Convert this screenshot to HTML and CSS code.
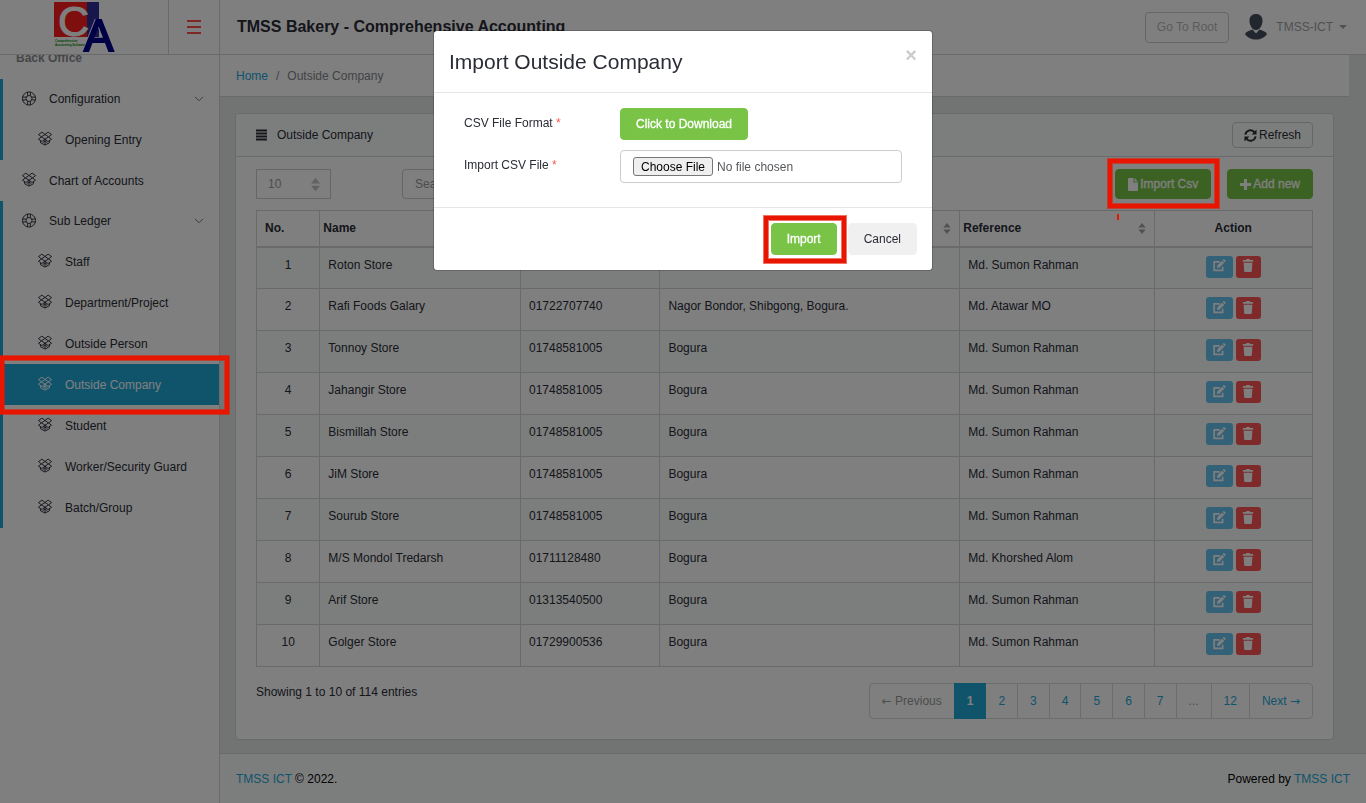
FILE: index.html
```html
<!DOCTYPE html>
<html lang="en">
<head>
<meta charset="utf-8">
<title>TMSS Bakery - Comprehensive Accounting</title>
<link rel="stylesheet" href="styles.css">
</head>
<body>
<svg class="defs" aria-hidden="true">
  <symbol id="ring" viewBox="0 0 16 16"><g fill="none" stroke="currentColor"><circle cx="8" cy="8" r="7"/><circle cx="8" cy="8" r="3.200"/><path d="M6.500 1v4M9.500 1v4M6.500 11v4M9.500 11v4M1 6.500h4M1 9.500h4M11 6.500h4M11 9.500h4"/></g></symbol>
  <symbol id="box" viewBox="0 0 16 16"><g fill="none" stroke="currentColor" stroke-linejoin="round"><path d="M4.700 1.200 8 3.700 4.200 6.300 1 3.800zM11.300 1.200 8 3.700l3.800 2.600L15 3.800zM4.200 6.300 1 8.800l3.700 2.400L8 8.700zM11.800 6.300 15 8.800l-3.700 2.400L8 8.700zM8 8.700v6M3.200 10.400v2.100L8 15l4.800-2.500v-2.100M5.500 12.500 8 10.500l2.500 2"/></g></symbol>
  <symbol id="sort" viewBox="0 0 8 12"><path fill="currentColor" d="M4 0 8 5H0zM0 7h8l-4 5z"/></symbol>
  <symbol id="edit" viewBox="0 0 16 16"><path fill="none" stroke="currentColor" stroke-width="2" d="M9 3.500H2V14h10.500V9.500"/><path fill="currentColor" d="m5.500 11 .5-3.200 5.800-5.800 2.700 2.700-5.800 5.800zM12.500 1.300l1-1q.7-.5 1.400.2l1.100 1.100q.6.700 0 1.300l-1 1z"/></symbol>
  <symbol id="trash" viewBox="0 0 12 14"><path fill="currentColor" d="M.5 1h3.300L4.500 0h3l.7 1h3.300v2H.5zM1.300 4h9.400l-.6 9q-.1 1-1.100 1H3q-1 0-1.100-1z"/></symbol>
  <symbol id="chevron" viewBox="0 0 10 6"><path fill="none" stroke="currentColor" d="m1 .8 4 4 4-4"/></symbol>
</svg>

<header class="topbar">
  <a class="brand" href="#" aria-label="Home page">
    <svg width="62" height="52" viewBox="0 0 62 52">
      <rect x="1" y="1" width="34" height="35" fill="#ff1c1c"/>
      <rect x="34" y="1" width="12" height="35" fill="#2e2e96"/>
      <text x="5" y="35" class="logo-c">C</text>
      <text x="31" y="50" class="logo-a">A</text>
      <text x="2" y="41" class="logo-small">Comprehensive</text>
      <text x="2" y="45" class="logo-small">Accounting Software</text>
    </svg>
  </a>
  <button class="menu" type="button" aria-label="Toggle menu"><svg width="14" height="16" viewBox="0 0 14 16"><path d="M0 2h14M0 8h14M0 14h14" stroke="#ff1616" stroke-width="1.500"/></svg></button>
  <h1 class="title">TMSS Bakery - Comprehensive Accounting</h1>
  <button class="btn root" type="button">Go To Root</button>
  <button class="user" type="button">
    <svg width="24" height="26" viewBox="0 0 24 26"><path fill="#454c5c" d="M12 0c4 0 6.500 2.600 6.500 6.500 0 4.500-2.500 9.500-6.500 9.500S5.500 11 5.500 6.500C5.500 2.600 8 0 12 0zM8.500 15.500 12 19.500l3.500-4c4 1.200 6.500 2.500 7.500 4.500-2 3.500-6.500 5.500-11 5.500S3 23.500 1 20c1-2 3.500-3.300 7.500-4.500z"/></svg>
    <span>TMSS-ICT</span><i class="caret"></i>
  </button>
</header>

<div class="layout">
  <nav class="sidebar">
    <div class="nav-scroll">
      <div class="nav-title">Back Office</div>
      <div class="group">
        <a class="item toggle" href="#"><svg class="ico"><use href="#ring"/></svg>Configuration<svg class="chev"><use href="#chevron"/></svg></a>
        <a class="item sub" href="#"><svg class="ico"><use href="#box"/></svg>Opening Entry</a>
      </div>
      <a class="item" href="#"><svg class="ico"><use href="#box"/></svg>Chart of Accounts</a>
      <div class="group">
        <a class="item toggle" href="#"><svg class="ico"><use href="#ring"/></svg>Sub Ledger<svg class="chev"><use href="#chevron"/></svg></a>
        <a class="item sub" href="#"><svg class="ico"><use href="#box"/></svg>Staff</a>
        <a class="item sub" href="#"><svg class="ico"><use href="#box"/></svg>Department/Project</a>
        <a class="item sub" href="#"><svg class="ico"><use href="#box"/></svg>Outside Person</a>
        <a class="item sub active" href="#"><svg class="ico"><use href="#box"/></svg>Outside Company</a>
        <a class="item sub" href="#"><svg class="ico"><use href="#box"/></svg>Student</a>
        <a class="item sub" href="#"><svg class="ico"><use href="#box"/></svg>Worker/Security Guard</a>
        <a class="item sub" href="#"><svg class="ico"><use href="#box"/></svg>Batch/Group</a>
      </div>
    </div>
  </nav>

  <div class="page">
    <main class="main">
      <div class="crumbs"><a href="#">Home</a><span class="slash">/</span><span>Outside Company</span></div>
      <section class="card">
        <div class="card-head">
          <svg width="11" height="12" viewBox="0 0 11 12"><path d="M0 1.500h11M0 4.500h11M0 7.500h11M0 10.500h11" stroke="#2a2c36" stroke-width="2"/></svg>
          <h2>Outside Company</h2>
          <button class="btn refresh" type="button"><svg width="13" height="13" viewBox="0 0 14 14"><g fill="none" stroke="currentColor" stroke-width="2"><path d="M1.500 6A5.500 5.500 0 0 1 11.500 3.800M12.500 8A5.500 5.500 0 0 1 2.500 10.200"/></g><path fill="currentColor" d="M13.500.5v5.300H8.200zM.5 13.500V8.200h5.300z"/></svg>Refresh</button>
        </div>
        <div class="card-body">
          <div class="tools">
            <span class="pick"><select aria-label="Rows per page"><option>10</option></select><svg class="updown"><use href="#sort"/></svg></span>
            <input class="search" type="text" placeholder="Search" aria-label="Search">
            <button class="btn green import-csv" type="button"><svg width="10" height="13" viewBox="0 0 10 13"><path fill="currentColor" d="M1 0h4.500v4.500H10V12q0 1-1 1H1q-1 0-1-1V1q0-1 1-1zM6.500 0 10 3.500H6.500z"/></svg>Import Csv</button>
            <button class="btn green" type="button"><svg width="11" height="11" viewBox="0 0 11 11"><path stroke="currentColor" stroke-width="3" d="M5.500 0v11M0 5.500h11"/></svg>Add new</button>
          </div>
          <table>
            <colgroup><col class="c-no"><col class="c-name"><col class="c-phone"><col class="c-addr"><col class="c-ref"><col></colgroup>
            <thead><tr><th class="first">No.</th><th>Name</th><th></th><th><svg class="sort"><use href="#sort"/></svg></th><th>Reference<svg class="sort"><use href="#sort"/></svg></th><th class="mid">Action</th></tr></thead>
            <tbody id="rows"></tbody>
          </table>
          <div class="below">
            <p>Showing 1 to 10 of 114 entries</p>
            <ul class="pager">
              <li class="off"><span><span class="arrow">←</span> Previous</span></li><li class="on"><a href="#">1</a></li><li><a href="#">2</a></li><li><a href="#">3</a></li><li><a href="#">4</a></li><li><a href="#">5</a></li><li><a href="#">6</a></li><li><a href="#">7</a></li><li class="off"><span>...</span></li><li><a href="#">12</a></li><li><a href="#">Next <span class="arrow">→</span></a></li>
            </ul>
          </div>
        </div>
      </section>
    </main>
    <footer class="footer"><span><a href="#">TMSS ICT</a> © 2022.</span><span>Powered by <a href="#">TMSS ICT</a></span></footer>
  </div>
</div>

<div class="backdrop">
  <div class="modal" role="dialog" aria-labelledby="dlg">
    <div class="modal-head"><h2 id="dlg">Import Outside Company</h2><button class="close" type="button" aria-label="Close">×</button></div>
    <form class="modal-body">
      <span class="label">CSV File Format <b>*</b></span>
      <div><button class="btn green big" type="button">Click to Download</button></div>
      <label class="label" for="csv">Import CSV File <b>*</b></label>
      <input id="csv" class="file" type="file">
    </form>
    <div class="modal-foot">
      <span class="marked"><button class="btn green big" type="button">Import</button><i class="mark mark-import"></i></span>
      <button class="btn big cancel" type="button">Cancel</button>
    </div>
  </div>
</div>
<i class="mark mark-side"></i>
<i class="mark mark-csv"></i>
<i class="tick"></i>
<script src="rows.js"></script>
</body>
</html>
```
FILE: styles.css
```css
* { box-sizing: border-box; }
body { margin: 0; font: 12px/18px "Liberation Sans", Arial, sans-serif; color: #2a2c36; background: #e4e8e6; }
a { color: #20a8d8; text-decoration: none; }
button, input, select { font: inherit; color: inherit; }
h1, h2, p, ul { margin: 0; padding: 0; }
.defs { position: absolute; width: 0; height: 0; }

.topbar { position: relative; z-index: 2; display: flex; align-items: center; height: 55px; background: #fff; border-bottom: 1px solid #d1d4d7; padding-right: 19px; }
.brand { width: 169px; height: 54px; border-right: 1px solid #d1d4d7; display: flex; align-items: center; justify-content: center; }
.brand svg { overflow: visible; }
.logo-c { font: 43px "Liberation Sans", Arial, sans-serif; fill: #fff; stroke: #fff; }
.logo-a { font: 44px "Liberation Sans", Arial, sans-serif; fill: #00008c; stroke: #00008c; stroke-width: 2px; filter: drop-shadow(-1px 0 0 #fff); }
.logo-small { font: bold 3px "Liberation Sans", Arial, sans-serif; fill: #008c00; }
.menu { width: 51px; height: 54px; border: 0; border-right: 1px solid #d1d4d7; background: none; padding: 0; display: flex; align-items: center; justify-content: center; }
.title { flex: 1; padding-left: 17px; font-size: 16px; line-height: 24px; }
.btn { display: inline-flex; align-items: center; justify-content: center; gap: 2px; height: 30px; padding: 0 12px; border: 1px solid #ccc; border-radius: 4px; background: none; white-space: nowrap; }
.root { height: 31px; padding: 0 11px; color: #b8b8b8; }
.user { display: flex; align-items: center; gap: 8px; border: 0; background: none; padding: 0; margin-left: 15px; color: #a0a3a6; }
.caret { border: 4px solid transparent; border-top-color: currentColor; border-bottom: 0; margin-left: -2px; }

.layout { display: flex; min-height: calc(100vh - 55px); }
.sidebar { width: 220px; flex: none; overflow: hidden; background: #fff; border-right: 1px solid #d1d4d7; }
.nav-scroll { margin-top: -6px; }
.nav-title { height: 30px; padding-left: 16px; font-weight: bold; color: #8a8d93; }
.item { display: flex; align-items: center; height: 41px; padding: 0 15px 0 21px; color: #2a2c36; }
.ico { width: 16px; height: 15px; margin: 0 12px 2px 0; }
.group { border-left: 3px solid #20a8d8; }
.group .item { padding-left: 18px; }
.group .sub { padding-left: 34px; }
.group .toggle { height: 40px; }
.group .active { background: #20a8d8; color: #fff; }
.chev { width: 10px; height: 6px; margin-left: auto; color: #777; }

.page { flex: 1; display: flex; flex-direction: column; min-width: 0; }
.main { flex: 1; margin-right: 17px; }
.crumbs { height: 42px; padding: 12px 16px; background: #fff; border-bottom: 1px solid #d1d4d7; color: #83868c; }
.slash { margin: 0 8px; }
.card { margin: 16px 15px 13px; background: #fff; border: 1px solid #d1d4d7; border-radius: 4px; }
.card-head { display: flex; align-items: center; height: 43px; padding: 0 20px; background: #f9fcfb; border-bottom: 1px solid #d1d4d7; border-radius: 4px 4px 0 0; }
.card-head h2 { flex: 1; margin-left: 10px; font-size: 12px; font-weight: normal; }
.refresh { height: 26px; padding: 0 11px; }
.card-body { padding: 12px 20px 20px; }
.tools { display: flex; margin-bottom: 11px; }
.pick { position: relative; margin-right: 71px; }
.pick select { appearance: none; display: block; width: 75px; height: 30px; padding: 0 11px; border: 1px solid #ccc; border-radius: 0; background: #fff; color: #999; }
.updown { position: absolute; right: 11px; top: 8px; width: 9px; height: 15px; color: #c4c4c4; pointer-events: none; }
.search { width: 200px; height: 30px; padding: 0 12px; border: 1px solid #ccc; border-radius: 4px; background: #fff; }
.search::placeholder { color: #999; }
.green { background: #79c447; border-color: #79c447; color: #fff; -webkit-text-stroke: 0.3px #fff; }
.import-csv { margin: 0 16px 0 auto; }

table { width: 100%; border-collapse: collapse; table-layout: fixed; }
.c-no { width: 6%; } .c-name { width: 19%; } .c-phone { width: 13.2%; } .c-addr { width: 28.4%; } .c-ref { width: 18.4%; }
th, td { border: 1px solid #d1d4d7; text-align: left; vertical-align: top; }
th { height: 36px; padding: 8px 3px; border-bottom-width: 2px; }
th.first { padding-left: 8px; }
th.mid, td.mid { text-align: center; }
td { height: 42px; padding: 8px; }
tbody tr:nth-child(odd) { background: #f9fcfb; }
.sort { float: right; width: 8px; height: 11px; margin: 4px 5px 0 0; color: #a0a3a6; }
.acts { display: flex; justify-content: center; gap: 3px; }
.act { display: flex; align-items: center; justify-content: center; width: 27px; height: 22px; padding: 0; border: 0; border-radius: 3px; background: #67c2ef; color: #fff; }
.act svg { width: 14px; height: 13px; margin-bottom: 2px; }
.del { width: 25px; background: #ff5454; }
.below { display: flex; justify-content: space-between; margin-top: 16px; }
.pager { display: flex; list-style: none; }
.pager li { margin-left: -1px; border: 1px solid #d8d8d8; padding: 8px 12px; }
.pager li:first-child { border-radius: 4px 0 0 4px; }
.pager li:last-child { border-radius: 0 4px 4px 0; }
.arrow { font-family: "DejaVu Sans", sans-serif; line-height: 1; }
.pager .off { color: #999; }
.pager .on { position: relative; background: #20a8d8; border-color: #20a8d8; font-weight: bold; }
.pager .on a { color: #fff; }
.footer { display: flex; justify-content: space-between; align-items: center; height: 50px; padding: 0 16px; background: #f9fcfb; border-top: 1px solid #d1d4d7; color: #000; }

.backdrop { position: fixed; inset: 0; z-index: 10; background: rgba(0, 0, 0, 0.5); }
.modal { width: 500px; margin: 30px auto; background: #fff; background-clip: padding-box; border: 1px solid rgba(0, 0, 0, 0.2); border-radius: 4px; }
.modal-head { display: flex; justify-content: space-between; align-items: flex-start; padding: 15px; border-bottom: 1px solid #e5e5e5; }
.modal-head h2 { font-size: 21px; line-height: 31px; font-weight: normal; }
.close { border: 0; background: none; padding: 0; font-size: 20px; line-height: 18px; font-weight: bold; color: #ccc; }
.modal-body { display: grid; grid-template-columns: 156px 1fr; row-gap: 10px; padding: 15px 30px 24px; }
.label { padding-top: 6px; }
.label b { font-weight: normal; color: #ff5454; }
.big { height: 32px; padding: 0 15px; }
.file { width: 100%; height: 33px; padding: 6px 12px; border: 1px solid #ccc; border-radius: 4px; color: #55595c; }
.file::file-selector-button { height: 19px; margin-right: 4px; padding: 0 7px; border: 1px solid #767676; border-radius: 3px; background: #efefef; color: #000; font: inherit; }
.modal-foot { display: flex; justify-content: flex-end; gap: 11px; padding: 15px; border-top: 1px solid #e5e5e5; }
.cancel { background: #f0f0f0; border-color: #f0f0f0; }
.marked { position: relative; }

.mark { position: absolute; z-index: 20; border: 4px solid #e81500; box-shadow: 0 0 0 1px rgba(232, 21, 0, 0.6), inset 0 0 0 1px rgba(232, 21, 0, 0.6); pointer-events: none; }
.mark-import { inset: -7px -9px -8px -7px; }
.mark-side { left: 0; top: 356px; width: 229px; height: 58px; }
.mark-csv { right: 147px; top: 159px; width: 111px; height: 49px; }
.tick { position: absolute; z-index: 20; right: 247px; top: 214px; width: 2px; height: 6px; background: #e81500; }
```
FILE: rows.js
```js
const rows = [
  ["Roton Store", "", "", "Md. Sumon Rahman"],
  ["Rafi Foods Galary", "01722707740", "Nagor Bondor, Shibgong, Bogura.", "Md. Atawar MO"],
  ["Tonnoy Store", "01748581005", "Bogura", "Md. Sumon Rahman"],
  ["Jahangir Store", "01748581005", "Bogura", "Md. Sumon Rahman"],
  ["Bismillah Store", "01748581005", "Bogura", "Md. Sumon Rahman"],
  ["JiM Store", "01748581005", "Bogura", "Md. Sumon Rahman"],
  ["Sourub Store", "01748581005", "Bogura", "Md. Sumon Rahman"],
  ["M/S Mondol Tredarsh", "01711128480", "Bogura", "Md. Khorshed Alom"],
  ["Arif Store", "01313540500", "Bogura", "Md. Sumon Rahman"],
  ["Golger Store", "01729900536", "Bogura", "Md. Sumon Rahman"]
];
document.getElementById("rows").innerHTML = rows.map((r, i) =>
  `<tr><td class="mid">${i + 1}</td>${r.map(c => `<td>${c}</td>`).join("")}<td><div class="acts"><button class="act" type="button" aria-label="Edit"><svg><use href="#edit"/></svg></button><button class="act del" type="button" aria-label="Delete"><svg><use href="#trash"/></svg></button></div></td></tr>`
).join("");
```
